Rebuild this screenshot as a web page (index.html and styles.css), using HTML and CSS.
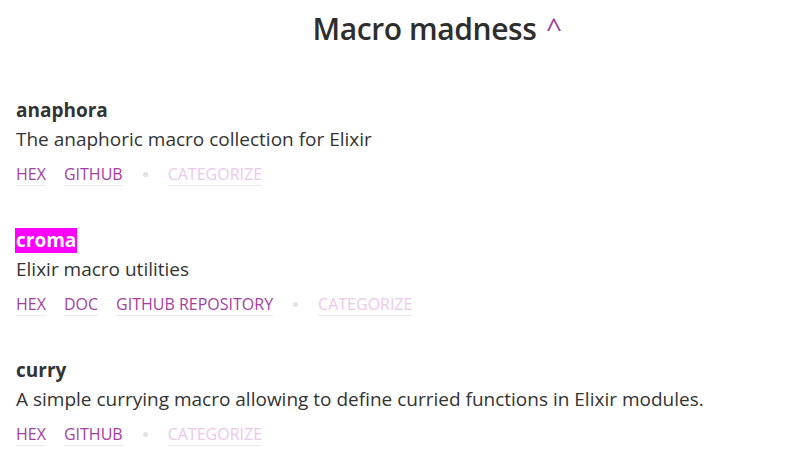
FILE: index.html
```html
<!DOCTYPE html>
<html>
<head>
<meta charset="utf-8">
<link rel="stylesheet" href="styles.css">
</head>
<body>
<h1 class="title">Macro madness <a class="caret" href="#">^</a></h1>
<ul class="libs">
  <li class="lib">
    <div class="lib-name"><span class="name">anaphora</span></div>
    <p class="lib-desc">The anaphoric macro collection for Elixir</p>
    <div class="links">
      <a class="link" href="#">HEX</a>
      <a class="link" href="#">GITHUB</a>
      <span class="dot"></span>
      <a class="link cat" href="#">CATEGORIZE</a>
    </div>
  </li>
  <li class="lib">
    <div class="lib-name"><span class="name hl">croma</span></div>
    <p class="lib-desc">Elixir macro utilities</p>
    <div class="links">
      <a class="link" href="#">HEX</a>
      <a class="link" href="#">DOC</a>
      <a class="link" href="#">GITHUB REPOSITORY</a>
      <span class="dot"></span>
      <a class="link cat" href="#">CATEGORIZE</a>
    </div>
  </li>
  <li class="lib">
    <div class="lib-name"><span class="name">curry</span></div>
    <p class="lib-desc">A simple currying macro allowing to define curried functions in Elixir modules.</p>
    <div class="links">
      <a class="link" href="#">HEX</a>
      <a class="link" href="#">GITHUB</a>
      <span class="dot"></span>
      <a class="link cat" href="#">CATEGORIZE</a>
    </div>
  </li>
</ul>
</body>
</html>
```
FILE: styles.css
```css
html, body {
  margin: 0;
  padding: 0;
  background: #fff;
}
body {
  font-family: "Open Sans", "Noto Sans", sans-serif;
  color: #333;
  padding: 0 16px;
}
.title {
  margin: 0;
  padding: 7px 0 0 62px;
  font-size: 30px;
  letter-spacing: -0.4px;
  line-height: 40px;
  font-weight: 600;
  text-align: center;
  color: #2e2e2e;
}
.caret {
  color: #a33ea3;
  text-decoration: none;
  font-weight: 400;
  font-size: 28px;
  vertical-align: 2px;
  margin-left: 2px;
}
.libs {
  list-style: none;
  margin: 49px 0 0;
  padding: 0;
}
.lib {
  margin: 0 0 42px;
}
.lib:last-child {
  margin-bottom: 0;
}
.lib-name {
  font-size: 19px;
  line-height: 25px;
  font-weight: 700;
}
.name {
  display: inline-block;
  line-height: 25px;
}
.name.hl {
  background: #ff00ff;
  color: #fff;
  padding: 0 1px;
  margin-left: -1px;
}
.lib-desc {
  margin: 2px 0 0;
  font-size: 19px;
  line-height: 28px;
}
.links {
  margin-top: 10px;
  display: flex;
  align-items: center;
  gap: 18px;
  font-size: 16px;
  line-height: 24px;
}
.link {
  color: #a33ea3;
  text-decoration: none;
  border-bottom: 1px solid #ececec;
  line-height: 22px;
}
.link.cat {
  color: #ecc8ec;
}
.dot {
  width: 5px;
  height: 5px;
  border-radius: 50%;
  background: #e2e2e2;
  margin: 0 2px;
}
```
